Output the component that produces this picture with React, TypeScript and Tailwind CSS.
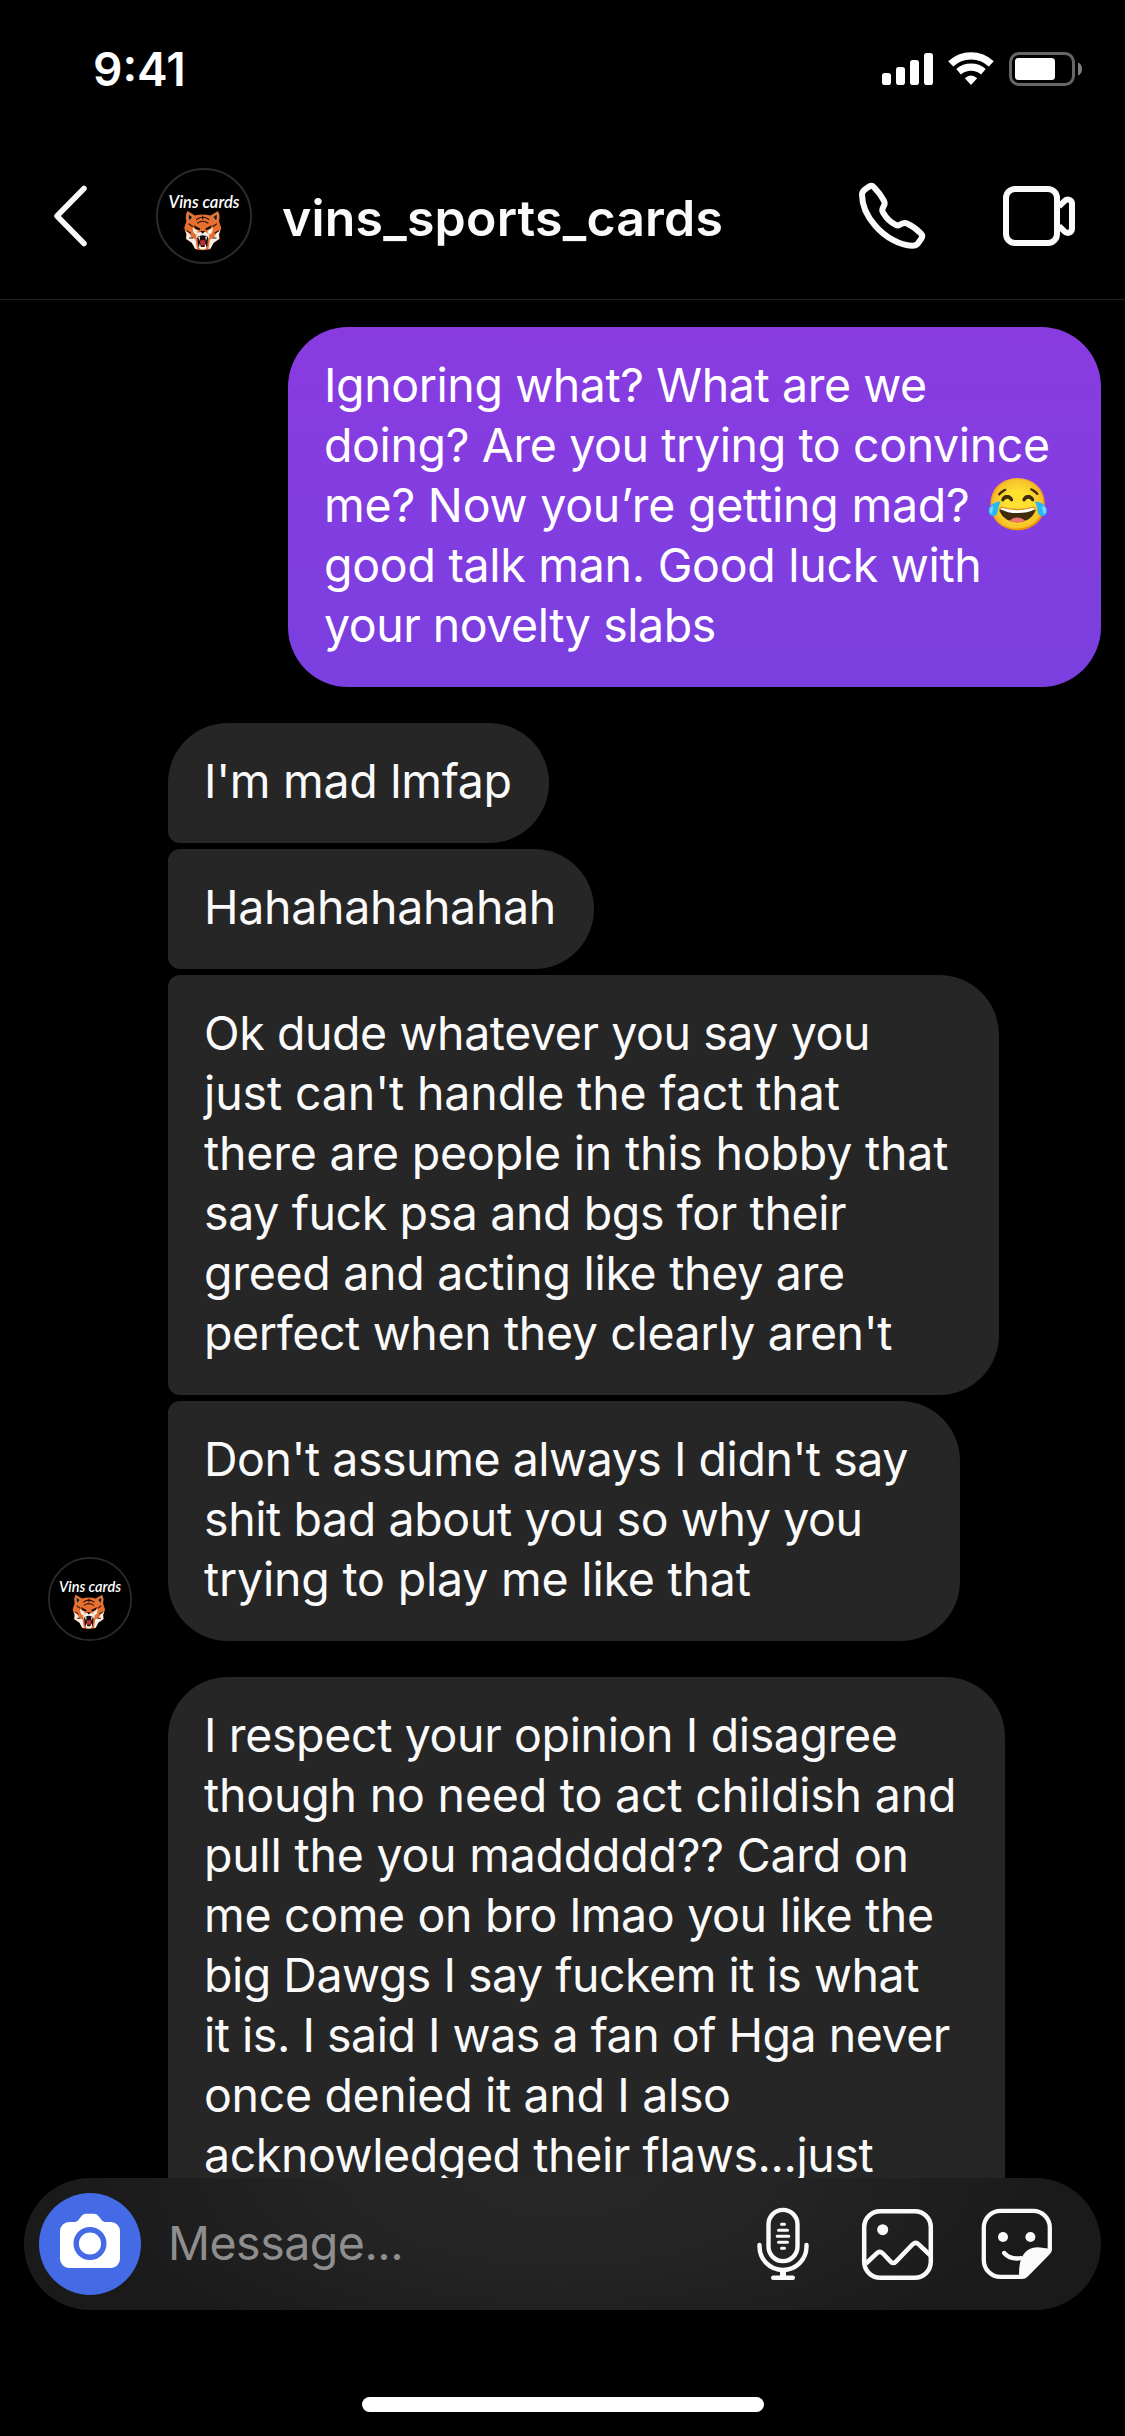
import clsx from "clsx"

type Line = [text: string, tracking: string, emoji?: string];

interface BubbleProps {
    lines: Line[]
    className?: string
}

const outgoing: Line[] = [
    ["Ignoring what? What are we", "tracking-[-0.42px]"],
    ["doing? Are you trying to convince", "tracking-[-0.39px]"],
    ["me? Now you’re getting mad?", "tracking-[-0.22px]", "😂"],
    ["good talk man. Good luck with", "tracking-[-0.29px]"],
    ["your novelty slabs", "tracking-[-0.47px]"]
];

const mad: Line[] = [["I'm mad lmfap", "tracking-[-0.3px]"]];

const haha: Line[] = [["Hahahahahahah", "tracking-[-0.32px]"]];

const whatever: Line[] = [
    ["Ok dude whatever you say you", "tracking-[-0.42px]"],
    ["just can't handle the fact that", "tracking-[-0.13px]"],
    ["there are people in this hobby that", "tracking-[-0.2px]"],
    ["say fuck psa and bgs for their", "tracking-[-0.39px]"],
    ["greed and acting like they are", "tracking-[-0.29px]"],
    ["perfect when they clearly aren't", "tracking-[-0.37px]"]
];

const assume: Line[] = [
    ["Don't assume always I didn't say", "tracking-[-0.47px]"],
    ["shit bad about you so why you", "tracking-[-0.4px]"],
    ["trying to play me like that", "tracking-[-0.2px]"]
];

const respect: Line[] = [
    ["I respect your opinion I disagree", "tracking-[-0.37px]"],
    ["though no need to act childish and", "tracking-[-0.2px]"],
    ["pull the you maddddd?? Card on", "tracking-[-0.23px]"],
    ["me come on bro lmao you like the", "tracking-[-0.34px]"],
    ["big Dawgs I say fuckem it is what", "tracking-[-0.49px]"],
    ["it is. I said I was a fan of Hga never", "tracking-[-0.49px]"],
    ["once denied it and I also", "tracking-[-0.34px]"],
    ["acknowledged their flaws...just", "tracking-[-0.42px]"]
];

function Bubble(props: BubbleProps) {
    return <div className={clsx("shrink-0 px-9 pt-7 pb-8 text-[46.5px] leading-[60px] whitespace-pre", props.className)}>
        {props.lines.map(([text, tracking, emoji]) => (
            <p key={text} className={clsx("h-[60px]", tracking)}>
                {text}
                {emoji && <span className="ml-[2px] text-[51px] leading-none"> {emoji}</span>}
            </p>
        ))}
    </div>
}

function Avatar({ className }: { className: string }) {
    return <svg viewBox="0 0 96 96" className={clsx("shrink-0", className)}>
        <circle cx="48" cy="48" r="47" fill="#000" stroke="#2b2b2b" strokeWidth="2" />
        <text x="12.5" y="39.5" textLength="71" lengthAdjust="spacingAndGlyphs" fill="#fff"
            className="font-['Lato'] text-[16.5px] font-semibold italic">Vins cards</text>
        {/* head */}
        <path d="M31.5 43 39 47.5q7.7-2.2 15.5 0L62 43q2.6 5 1 10l2.2 7-2 6 .4 5-6.4 4-3.7 6.5-6.8.7-6.8-.7-3.7-6.5-6.4-4 .4-5-2-6 2.2-7q-1.6-5 1-10Z" fill="#e8702f" />
        {/* ears */}
        <path d="m32.6 45.8 4 3.4-3.6 4Q31.600 49.500 32.6 45.8ZM60.900 45.800l-4 3.400 3.600 4q1.400-3.700.4-7.400Z" fill="#2a1712" stroke="#f0c9a8" strokeWidth="0.5" />
        {/* cheeks and muzzle */}
        <path d="m29.2 62 3.800 3 2.500 4.500 4 2 1.500 9.500-2-.2-3.200-6-5.500-4 .4-4.500ZM64.300 62l-3.800 3-2.500 4.500-4 2-1.500 9.500 2-.2 3.200-6 5.500-4-.4-4.500Z" fill="#f7f1ec" />
        <path d="m36.500 59.500 5.500 3.500-1.500 4-3-2.500ZM57 59.500l-5.500 3.500 1.500 4 3-2.500Z" fill="#f7f1ec" />
        <path d="M41 65.500q2.500-2.500 5.700-1 3.200-1.500 5.700 1l1 4-3 2h-7.400l-3-2Z" fill="#f7f1ec" />
        {/* stripes */}
        <path d="M40.500 51.500q6.200-4.500 12.400 0M41.500 55q5.200-3.500 10.400 0M46.700 48v3M33 56l3.500 2.500M60.500 56 57 58.500M31 63l3.500 2M62.500 63 59 65M33.500 70h3M60 70h-3" fill="none" stroke="#2a1410" strokeWidth="1.2" strokeLinecap="round" />
        <path d="m37.500 57 6.700 3.500-.7 1.800-4.200-1.500ZM56 57l-6.700 3.500.7 1.800 4.200-1.500ZM44.200 63h5l-2.500 2.700Z" fill="#1b0d0b" />
        {/* mouth */}
        <path d="M41.300 69q5.400-3.500 10.800 0l-.8 9-2.600 2.500h-4L42.100 78Z" fill="#1d0a0a" />
        <path d="M44 73q2.700-2 5.400 0l-.5 4.500h-4.400Z" fill="#bd2f36" />
        <path d="m42.200 69 1.800-.6-.4 4.600ZM51.200 69l-1.800-.6.4 4.600ZM43 79.500l.6-4 1.400 3.500h3.400l1.400-3.500.6 4-1.500 1.800h-4.400Z" fill="#fff" />
    </svg>
}

function StatusBar() {
    return <div className="flex h-[138px] shrink-0 items-center justify-between pr-[41px] pl-[93px]">
        <span className="text-[46px] leading-none font-semibold text-white">9:41</span>
        <svg viewBox="0 0 204 38" className="h-[38px] w-[204px]" fill="#fff">
            <rect x="2" y="23" width="9" height="12" rx="2.8" />
            <rect x="16" y="17" width="9" height="18" rx="2.8" />
            <rect x="30" y="10" width="9" height="25" rx="2.8" />
            <rect x="44" y="3" width="9" height="32" rx="2.8" />
            <path d="M70.700 13.900A29.500 29.500 0 0 1 111.300 13.900M78.600 21.700A19 19 0 0 1 103.400 21.700" fill="none" stroke="#fff" strokeWidth="7.2" />
            <path d="m91 35-6.200-6.700q6.200-5.600 12.400 0Z" />
            <rect x="130.5" y="3.5" width="63" height="31" rx="8.5" fill="none" stroke="#666" strokeWidth="3" />
            <rect x="135" y="8" width="40" height="22" rx="3.5" />
            <path d="M198 12.500q4 1.800 4 6.500t-4 6.500Z" fill="#808080" />
        </svg>
    </div>
}

function Header() {
    return <header className="flex h-[162px] shrink-0 items-center border-b border-[#222222] pr-[47px] pb-[5px] pl-[51px]">
        <svg viewBox="0 0 39 72" className="h-[72px] w-[39px]" fill="none" stroke="#fafafa" strokeWidth="5.5" strokeLinecap="round" strokeLinejoin="round">
            <path d="M33 8.500 6 36l27 27.500" />
        </svg>
        <Avatar className="ml-[66px] size-24" />
        <h1 className="ml-[30px] flex-1 pt-[3px] text-[50px] leading-none font-semibold tracking-[0.2px]">vins_sports_cards</h1>
        <svg viewBox="0 0 72 72" className="size-[72px]" fill="none" stroke="#fafafa" strokeWidth="6" strokeLinejoin="round">
            <path d="M6 14.500C6 12 7 11 8.500 9.800L13.200 6.600C15 5.400 16.500 5.600 18 7.200 21.500 10.800 25.500 16 28 20.800 29.300 23.300 28.800 24.800 27.300 27 26 29 26 30.800 27 32.500 30.500 38.500 34.500 42.500 40 45 41.800 45.800 43 45.600 44.800 44.200 47 42.800 49 42.500 51 43.400 56 45.700 61 49.200 65 53.500 66.600 55.300 66.600 57 65.200 58.800L62 63.300C60.500 65.200 59 65.700 56 65.700 44 65.700 29 57 19.500 46 11.500 37 6 25.500 6 14.500Z" />
        </svg>
        <svg viewBox="0 0 78 66" className="ml-[72px] h-[66px] w-[78px]" fill="none" stroke="#fafafa" strokeWidth="6">
            <rect x="6" y="6" width="51" height="54" rx="9" />
            <path d="M59 23.500 64 18.500C67 15 72 16.500 72 21V45.300C72 50 67 51.300 64 48L59 43" />
        </svg>
    </header>
}

function Composer() {
    return <div className="mx-6 flex h-[132px] shrink-0 items-center rounded-full bg-[#1a1a1a] bg-[radial-gradient(ellipse_46%_150%_at_50%_0%,#272727_0%,#252525_40%,#1a1a1a_100%)] pr-[47px] pl-[15px]">
        <svg viewBox="0 0 102 102" className="size-[102px]">
            <circle cx="51" cy="51" r="51" fill="#446be5" />
            <path d="M30 29h5.500c2 0 3.200-1 4.500-2.800l2.500-3.300q1.700-2.200 4.500-2.200h8q2.800 0 4.500 2.200l2.500 3.300c1.300 1.800 2.500 2.800 4.500 2.800H72a9 9 0 0 1 9 9v28a9 9 0 0 1-9 9H30a9 9 0 0 1-9-9V38a9 9 0 0 1 9-9Z" fill="#fff" />
            <circle cx="51" cy="50.5" r="13.8" fill="none" stroke="#446be5" strokeWidth="5.4" />
        </svg>
        <span className="mb-[2px] ml-[27px] flex-1 text-[46.5px] leading-none tracking-[-0.5px] text-[#8e8e8e]">Message...</span>
        <svg viewBox="0 0 58 78" className="h-[78px] w-[58px]" fill="none" stroke="#fafafa" strokeWidth="4.4" strokeLinecap="round">
            <rect x="14.5" y="4.9" width="29" height="51.2" rx="14.5" />
            <path d="M5.500 40v1.500a23.500 23.500 0 0 0 47 0V40M19.200 72.700h19.600" />
            <path d="M29 65v7" strokeWidth="6" strokeLinecap="butt" />
            <path d="M27.500 19.300h3M24.500 25.300h9M23.200 31.300h11.600M24.500 37.300h9M27.500 43.300h3" strokeWidth="3" />
        </svg>
        <svg viewBox="0 0 76 76" className="ml-[47px] size-[76px]" fill="none" stroke="#fafafa" strokeWidth="4.5" strokeLinejoin="round">
            <rect x="5.2" y="5.2" width="66.6" height="66.6" rx="16" />
            <circle cx="23.7" cy="23.7" r="5.5" fill="#fafafa" stroke="none" />
            <path d="M7 57.500 17.700 47.300q3-2.800 6 0l8.200 8.600q2.400 2.400 4.800 0L53.700 38.300q3-2.800 6 0L71.500 49.500" />
        </svg>
        <svg viewBox="0 0 76 76" className="ml-[43px] size-[76px]" fill="none" stroke="#fafafa" strokeWidth="4.3" strokeLinecap="round">
            <path d="M43 70.900H22.500a16.700 16.700 0 0 1-16.700-16.700V21.500A16.700 16.700 0 0 1 22.500 4.800h32.600a16.700 16.700 0 0 1 16.700 16.700V43" />
            <path d="M74 43q0 3-2.300 5.300L49.800 70.500Q47.300 73 44 73h-2.800Q40.500 60 43 53.500 47.500 41.300 60 41.300Z" fill="#fafafa" stroke="none" />
            <circle cx="25" cy="31" r="5" fill="#fafafa" stroke="none" />
            <circle cx="52.4" cy="31" r="5" fill="#fafafa" stroke="none" />
            <path d="M26.200 47Q32 53.800 43 52.200" />
        </svg>
    </div>
}

export default function App() {
    return <div className="flex h-[2436px] w-[1125px] flex-col overflow-hidden bg-black font-['Inter',sans-serif] text-[#fafafa]">
        <StatusBar />
        <Header />

        <main className="flex h-[1878px] shrink-0 flex-col gap-9 overflow-hidden pt-[27px]">
            <Bubble lines={outgoing} className="mr-6 w-[813px] self-end rounded-[60px] bg-linear-to-b from-[#893be0] to-[#7b3fe0] text-white" />

            <div className="flex shrink-0 items-end gap-9 pl-12">
                <Avatar className="size-[84px]" />
                <div className="flex flex-col gap-1.5">
                    <Bubble lines={mad} className="w-[381px] rounded-[60px] rounded-bl-[12px] bg-[#262626]" />
                    <Bubble lines={haha} className="w-[426px] rounded-l-[12px] rounded-r-[60px] bg-[#262626]" />
                    <Bubble lines={whatever} className="w-[831px] rounded-l-[12px] rounded-r-[60px] bg-[#262626]" />
                    <Bubble lines={assume} className="w-[792px] rounded-[60px] rounded-tl-[12px] bg-[#262626]" />
                </div>
            </div>

            <Bubble lines={respect} className="ml-[168px] w-[837px] rounded-t-[60px] bg-[#262626]" />
        </main>

        <Composer />

        <div className="flex flex-1 items-end justify-center pb-6">
            <div className="h-[15px] w-[402px] rounded-full bg-white" />
        </div>
    </div>
}
